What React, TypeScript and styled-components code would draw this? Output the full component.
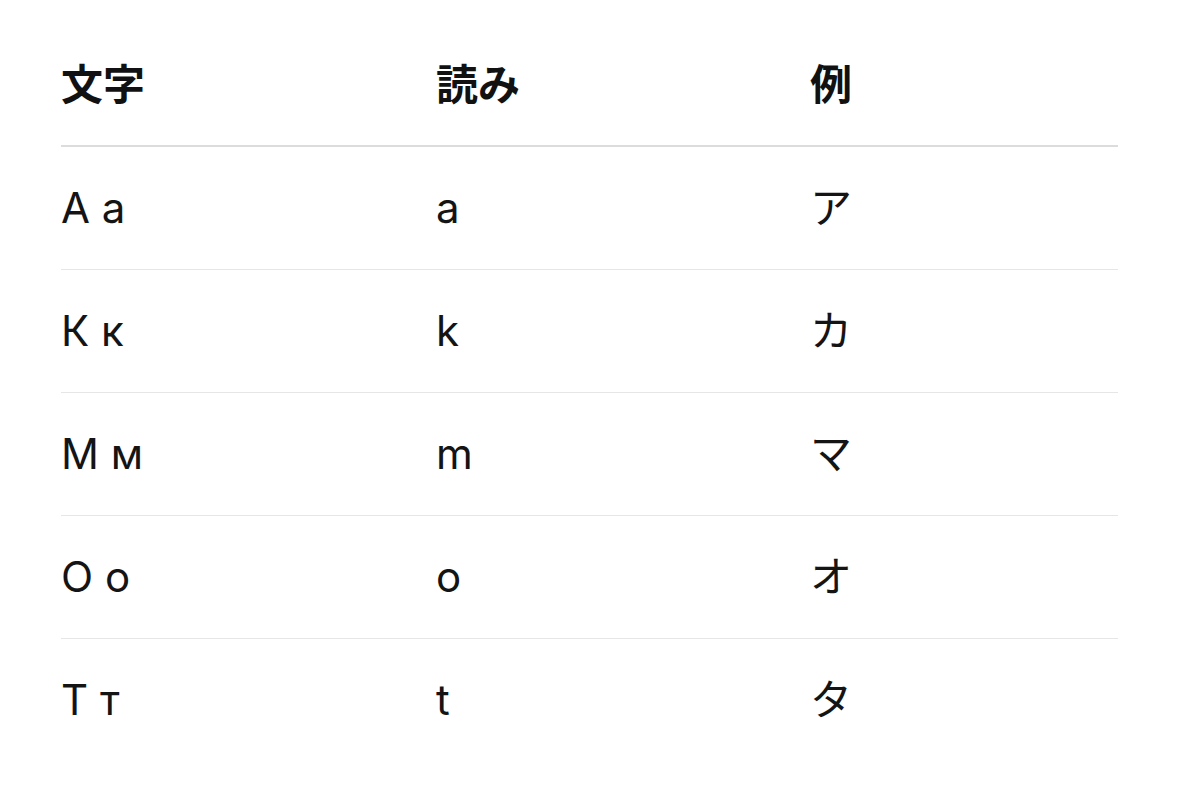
import React from "react";
import styled, { createGlobalStyle } from "styled-components";

const Global = createGlobalStyle`
  html, body { margin: 0; padding: 0; background: #ffffff; }
  body { font-family: Inter, "Noto Sans CJK JP", sans-serif; color: #141414; }
`;

const Page = styled.div`
  padding: 24px 61px;
`;

const Table = styled.table`
  width: 100%;
  border-collapse: collapse;
  table-layout: fixed;
`;

const Col = styled.col<{ $w?: number }>`
  width: ${(p) => (p.$w ? `${p.$w}px` : "auto")};
`;

const Th = styled.th`
  text-align: left;
  font-weight: 700;
  font-size: 42px;
  line-height: 62px;
  padding: 30px 0 29px;
  border-bottom: 2px solid #dcdcdc;
  color: #111;
`;

const Td = styled.td<{ $last?: boolean }>`
  text-align: left;
  font-weight: 400;
  font-size: 42px;
  line-height: 62px;
  padding: 30px 0;
  border-bottom: ${(p) => (p.$last ? "none" : "1px solid #e6e6e6")};
`;

const rows = [
  ["А а", "a", "ア"],
  ["К к", "k", "カ"],
  ["М м", "m", "マ"],
  ["О о", "o", "オ"],
  ["Т т", "t", "タ"],
];

export default function App() {
  return (
    <Page>
      <Global />
      <Table>
        <colgroup>
          <Col $w={375} />
          <Col $w={374} />
          <Col />
        </colgroup>
        <thead>
          <tr>
            <Th>文字</Th>
            <Th>読み</Th>
            <Th>例</Th>
          </tr>
        </thead>
        <tbody>
          {rows.map((r, i) => (
            <tr key={i}>
              {r.map((c, j) => (
                <Td key={j} $last={i === rows.length - 1}>
                  {c}
                </Td>
              ))}
            </tr>
          ))}
        </tbody>
      </Table>
    </Page>
  );
}
